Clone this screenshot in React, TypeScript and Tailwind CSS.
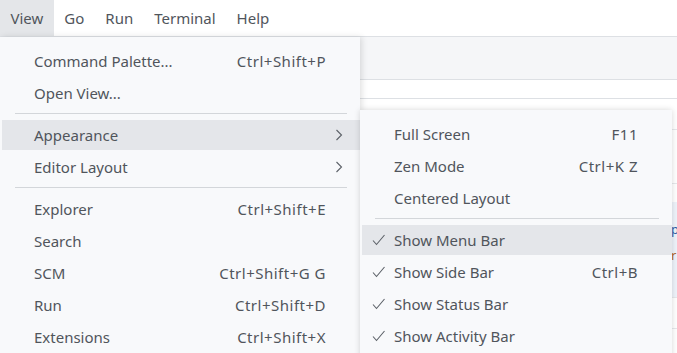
import React from "react";

type Item =
  | { sep: true }
  | { sep?: false; label: string; shortcut?: string; sub?: boolean; active?: boolean; check?: boolean };

const mainItems: Item[] = [
  { label: "Command Palette...", shortcut: "Ctrl+Shift+P" },
  { label: "Open View..." },
  { sep: true },
  { label: "Appearance", sub: true, active: true },
  { label: "Editor Layout", sub: true },
  { sep: true },
  { label: "Explorer", shortcut: "Ctrl+Shift+E" },
  { label: "Search" },
  { label: "SCM", shortcut: "Ctrl+Shift+G G" },
  { label: "Run", shortcut: "Ctrl+Shift+D" },
  { label: "Extensions", shortcut: "Ctrl+Shift+X" },
];

const subItems: Item[] = [
  { label: "Full Screen", shortcut: "F11" },
  { label: "Zen Mode", shortcut: "Ctrl+K Z" },
  { label: "Centered Layout" },
  { sep: true },
  { label: "Show Menu Bar", check: true, active: true },
  { label: "Show Side Bar", check: true, shortcut: "Ctrl+B" },
  { label: "Show Status Bar", check: true },
  { label: "Show Activity Bar", check: true },
];

function Chevron() {
  return (
    <svg width="8" height="12" viewBox="0 0 8 12" className="absolute right-[17px]">
      <polyline points="1.5,1 6.5,6 1.5,11" fill="none" stroke="#5c6168" strokeWidth="1.1" />
    </svg>
  );
}

function Check() {
  return (
    <svg width="14" height="12" viewBox="0 0 14 12" className="absolute left-[10px]">
      <polyline points="1,6.5 4.5,10.5 12.5,1" fill="none" stroke="#5c6168" strokeWidth="1.1" />
    </svg>
  );
}

function MenuList({ items }: { items: Item[] }) {
  return (
    <div className="flex flex-col pt-[9px]">
      {items.map((it, i) =>
        it.sep ? (
          <div key={i} className="h-[10px] pt-[3px]">
            <div className="ml-[15px] mr-[13px] h-px bg-[#d3d6da]" />
          </div>
        ) : (
          <div key={i} className="h-8 pl-[2px]">
            <div
              className={
                "relative flex h-[30px] items-center pl-[32px] pr-[34px] " +
                (it.active ? "bg-[#e4e6ea]" : "")
              }
            >
              {it.check && <Check />}
              <span className="flex-1 whitespace-nowrap">{it.label}</span>
              {it.shortcut && <span className="whitespace-nowrap tracking-[0.5px]">{it.shortcut}</span>}
              {it.sub && <Chevron />}
            </div>
          </div>
        )
      )}
    </div>
  );
}

export default function App() {
  return (
    <div className="relative h-[353px] w-[677px] overflow-hidden bg-white font-['Noto_Sans',sans-serif] text-[15px] text-[#50555c]">
      <div className="flex h-[37px] border-b border-[#dde0e4] bg-white">
        <div className="flex items-center bg-[#e4e6e9] px-[10.5px]">View</div>
        <div className="flex items-center px-[10.5px]">Go</div>
        <div className="flex items-center px-[10.5px]">Run</div>
        <div className="flex items-center px-[10.5px]">Terminal</div>
        <div className="flex items-center px-[10.5px]">Help</div>
      </div>
      <div className="h-[43px] border-b border-[#dde0e4] bg-[#f5f6f8]" />
      <div className="h-[19px] border-b border-[#dde0e4]" />
      <div className="h-[31px] border-b border-[#e6e8eb]" />
      <div className="h-[54px] border-b border-[#e6e8eb]" />
      <div className="h-[18px]" />
      <div className="h-[96px] border-b border-[#e6e8eb] bg-[#eef3fa] pl-[671px] pt-[14px] text-[13px] leading-[26px]">
        <div className="text-[#2f5fa8]">p,</div>
        <div className="text-[#b0662a]">r</div>
      </div>
      <div className="h-[31px] border-b border-[#e6e8eb]" />

      <div className="absolute left-0 top-[37px] h-[330px] w-[360px] bg-[#f8f9fb] shadow-[2px_0_6px_rgba(0,0,0,0.12)]">
        <MenuList items={mainItems} />
      </div>
      <div className="absolute left-[360px] top-[110px] h-[260px] w-[312px] bg-[#f8f9fb] shadow-[0_0_6px_rgba(0,0,0,0.16)]">
        <MenuList items={subItems} />
      </div>
    </div>
  );
}
